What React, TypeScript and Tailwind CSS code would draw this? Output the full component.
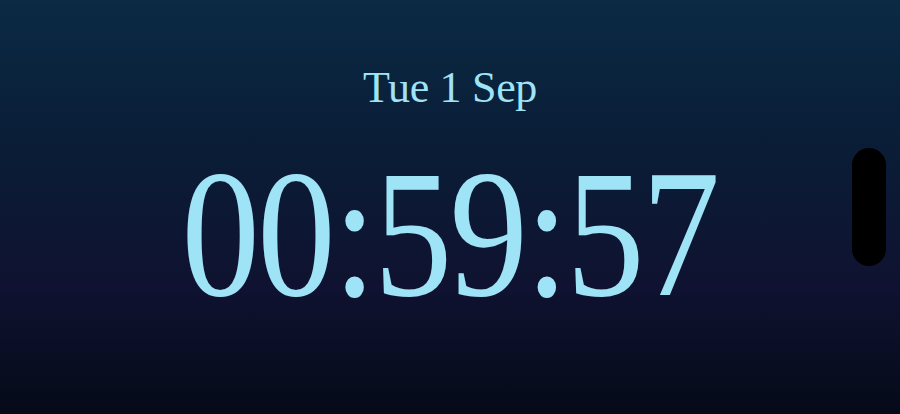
import React from "react";

export default function App() {
  return (
    <div className="relative w-[900px] h-[414px] overflow-hidden bg-[linear-gradient(180deg,#0b2a44_0%,#0a1d37_35%,#0f1230_70%,#050a18_100%)]">
      <div className="flex flex-col items-center font-['Liberation_Serif',serif] text-[#9fe3f7]">
        <div className="mt-[66px] text-[44px] leading-none tracking-[-0.3px]">Tue 1 Sep</div>
        <div className="mt-[33px] text-[182px] leading-none whitespace-nowrap scale-x-[0.86] tracking-[-3px]">
          00:59:57
        </div>
      </div>
      <div className="absolute left-[852px] top-[148px] w-[34px] h-[118px] rounded-full bg-black" />
    </div>
  );
}
